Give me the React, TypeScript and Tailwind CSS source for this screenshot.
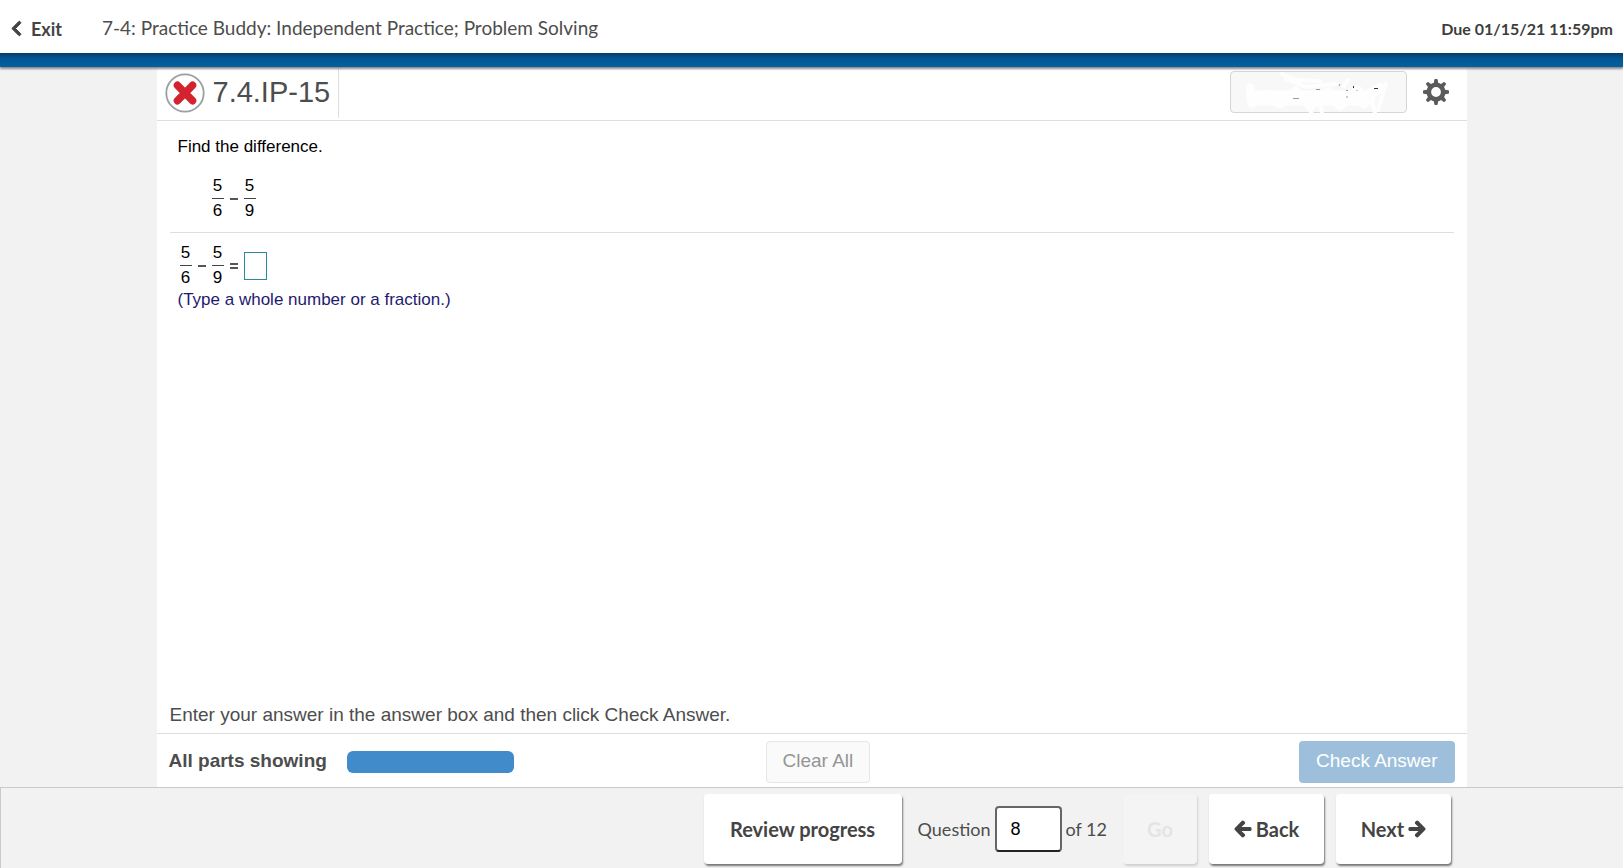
import { useState } from "react";
import { FaArrowLeft, FaArrowRight, FaChevronLeft } from "react-icons/fa";

interface FractionProps {
  top: number;
  bottom: number;
}

function Fraction({ top, bottom }: FractionProps) {
  return (
    <span className="inline-flex w-3 flex-col items-center leading-6">
      <span>{top}</span>
      <span className="h-px w-full bg-[#444]" />
      <span>{bottom}</span>
    </span>
  );
}

function WrongBadge() {
  return (
    <svg viewBox="0 0 40 40" className="size-10" role="img" aria-label="Incorrect">
      <circle cx="20" cy="20" r="18.7" fill="#fff" stroke="#9a9fa1" strokeWidth="1.8" />
      <path
        d="M12.5 12.3 L27.5 27.7 M27.5 12.3 L12.5 27.7"
        stroke="#d2232f"
        strokeWidth="7.6"
        strokeLinecap="round"
      />
    </svg>
  );
}

function GearIcon() {
  const teeth = [0, 45, 90, 135, 180, 225, 270, 315];
  return (
    <svg viewBox="0 0 26 26" className="size-[26px]" aria-hidden="true">
      <circle cx="13" cy="13" r="7.2" fill="none" stroke="#5b5b5b" strokeWidth="4.6" />
      {teeth.map((angle) => (
        <path
          key={angle}
          d="M10.6 5 L11.3 0.8 Q11.4 0 12.2 0 H13.8 Q14.6 0 14.7 0.8 L15.4 5 Z"
          fill="#5b5b5b"
          transform={`rotate(${angle} 13 13)`}
        />
      ))}
    </svg>
  );
}

// White brush strokes laid over the name on the button
function Scribble() {
  return (
    <svg viewBox="0 0 190 60" className="h-[60px] w-[190px]" aria-hidden="true">
      <g fill="none" stroke="#fefefe" strokeLinecap="round" strokeLinejoin="round">
        <path
          strokeWidth="9"
          d="M26 24 L28 39 L42 30 L56 40 L72 27 L86 42 L104 28 L116 42 L134 26 L140 40"
        />
        <path strokeWidth="15" d="M32 34 H144" />
        <path strokeWidth="4" d="M58 10 L72 16 L96 17 M62 15 L82 23 L112 20 M162 20 L154 46" />
        <path strokeWidth="10" d="M146 30 L156 24" />
        <path strokeWidth="4" d="M84 43 L88 50 M96 40 L98 49 M134 40 L148 36 L152 54 M120 22 L124 16" />
      </g>
      <g fill="none" stroke="#999" strokeWidth="1">
        <path d="M92 25.5 h4 M69 34.5 h6 M122 26.5 h2 M133 26 v1 M123 32 v2 M115 22 l1 -2" />
        <path stroke="#333" d="M129.5 22 v2 M150 24.5 h4" />
      </g>
    </svg>
  );
}

const navButton =
  "flex h-[70px] items-center justify-center gap-1 rounded bg-white text-xl font-bold text-[#444] shadow-[1px_2px_2px_#777]";

const arrowIcon = "size-[18px] stroke-current stroke-[40]";

export default function App() {
  const [answer, setAnswer] = useState("");
  const [question, setQuestion] = useState("8");

  return (
    <div className="flex min-h-screen flex-col bg-[#f2f2f2] font-['Liberation_Sans',sans-serif] text-[17px] text-[#4d4d4d]">
      <header className="flex h-[53px] items-center justify-between bg-white pt-1 pr-2.5 pl-2 font-['Lato',sans-serif]">
        <div className="flex items-center gap-10">
          <a href="#exit" className="flex items-center gap-1.5 text-lg font-bold text-[#444]">
            <FaChevronLeft className="size-[17px] stroke-current stroke-[30]" />
            Exit
          </a>
          <h1 className="text-[19px]">7-4: Practice Buddy: Independent Practice; Problem Solving</h1>
        </div>
        <p className="text-base font-bold text-[#3d3d3d]">Due 01/15/21 11:59pm</p>
      </header>
      <div className="relative h-[14px] bg-linear-to-b from-[#073c66] via-[#045694] via-40% to-[#04609f] shadow-[0_2px_2px_#8a8a8a]" />

      <main className="mx-auto flex w-full max-w-[1310px] flex-1 flex-col bg-white">
        <div className="flex h-[54px] items-stretch justify-between border-b border-[#dedede] pr-[18px] pl-2">
          <div className="mb-0.5 flex items-center gap-2 border-r border-[#dedede] pr-2">
            <WrongBadge />
            <h2 className="text-[29px]">7.4.IP-15</h2>
          </div>
          <div className="flex items-center gap-4 pb-1">
            <button
              type="button"
              aria-label="Account"
              className="relative h-[42px] w-[177px] rounded border border-[#d4d6d8] bg-[#f8f8f8]"
            >
              <span className="absolute -top-2 -left-[7px]">
                <Scribble />
              </span>
            </button>
            <button type="button" aria-label="Settings">
              <GearIcon />
            </button>
          </div>
        </div>

        <section className="px-[13px] text-black">
          <p className="px-2 pt-3.5 leading-6">Find the difference.</p>
          <div className="flex items-center gap-1.5 border-b border-[#dedede] pt-[15px] pb-[9px] pl-[42px]">
            <Fraction top={5} bottom={6} />
            <span className="h-0.5 w-2 bg-[#555]" />
            <Fraction top={5} bottom={9} />
          </div>
          <div className="flex items-center gap-1.5 px-2.5 pt-2 leading-6">
            <Fraction top={5} bottom={6} />
            <span className="h-0.5 w-2 bg-[#555]" />
            <Fraction top={5} bottom={9} />
            <span className="h-1.5 w-2 border-y-2 border-[#555]" />
            <input
              aria-label="Answer"
              value={answer}
              onChange={(e) => setAnswer(e.target.value)}
              className="h-7 w-[23px] border border-[#2b8a99] text-center outline-none"
            />
          </div>
          <p className="px-2 leading-5 text-[#1f1a70]">(Type a whole number or a fraction.)</p>
        </section>

        <p className="mt-auto px-[13px] pb-1 text-[19px] leading-7">
          Enter your answer in the answer box and then click Check Answer.
        </p>
        <div className="grid h-[54px] grid-cols-[597px_auto_1fr] items-center border-t border-[#dedede] px-3 pt-0.5 text-[19px]">
          <div className="flex items-center gap-5">
            <span className="font-bold">All parts showing</span>
            <span className="h-[22px] w-[167px] rounded-md bg-[#428bca]" />
          </div>
          <button
            type="button"
            className="h-[42px] rounded border border-[#e6e6e6] bg-[#fafafa] px-4 text-[#959595]"
          >
            Clear All
          </button>
          <button
            type="button"
            className="h-[42px] justify-self-end rounded bg-[#9ebfdb] px-[17px] text-white"
          >
            Check Answer
          </button>
        </div>
      </main>

      <footer className="border-t border-l border-[#c8cbcd] font-['Lato',sans-serif]">
        <div className="mx-auto flex h-20 w-full max-w-[1310px] items-center justify-end gap-3 pt-0.5 pr-4">
          <button type="button" className={`${navButton} w-[198px]`}>
            Review progress
          </button>
          <label className="flex items-center gap-1 px-1 text-lg">
            Question
            <input
              value={question}
              onChange={(e) => setQuestion(e.target.value)}
              className="h-[46px] w-[67px] rounded border-2 border-[#666] border-b-[#222] bg-white px-3.5 font-['Liberation_Sans',sans-serif] text-lg text-black"
            />
            of 12
          </label>
          <button
            type="button"
            disabled
            className="h-[70px] w-[74px] rounded bg-[#f4f4f4] text-xl font-bold text-[#e4e4e4] shadow-[1px_2px_2px_#d0d0d0]"
          >
            Go
          </button>
          <button type="button" className={`${navButton} w-[115px]`}>
            <FaArrowLeft className={arrowIcon} />
            Back
          </button>
          <button type="button" className={`${navButton} w-[115px]`}>
            Next
            <FaArrowRight className={arrowIcon} />
          </button>
        </div>
      </footer>
    </div>
  );
}
